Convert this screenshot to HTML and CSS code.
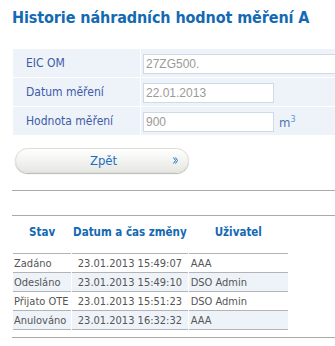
FILE: index.html
```html
<!doctype html>
<html lang="cs">
  <head>
    <meta charset="UTF-8" />
    <title>Historie náhradních hodnot měření A</title>
    <link rel="stylesheet" href="styles.css">
  </head>
  <body>
    <div class="page">
      <h1 class="page-title">Historie náhradních hodnot měření A</h1>

      <table class="detail-form">
        <tr>
          <td class="label">EIC OM</td>
          <td class="field"><input type="text" class="input-field input-wide" value="27ZG500." readonly /></td>
        </tr>
        <tr>
          <td class="label">Datum měření</td>
          <td class="field"><input type="text" class="input-field" value="22.01.2013" readonly /></td>
        </tr>
        <tr>
          <td class="label">Hodnota měření</td>
          <td class="field"><input type="text" class="input-field" value="900" readonly /><span class="unit">m<sup>3</sup></span></td>
        </tr>
      </table>

      <button type="button" class="back-btn">
        <span class="back-text">Zpět</span>
        <svg class="back-arrow" width="5" height="7" viewBox="0 0 5 7">
          <path d="M0.5 0.5 L2.5 3.5 L0.5 6.5 M2.5 0.5 L4.5 3.5 L2.5 6.5" fill="none" stroke="#1c6fc0" stroke-width="1" />
        </svg>
      </button>

      <hr class="divider first" />
      <hr class="divider" />

      <!-- Historie stavu -->
      <table class="history">
        <thead>
          <tr>
            <th class="col-state">Stav</th>
            <th class="col-date">Datum a čas změny</th>
            <th class="col-user">Uživatel</th>
          </tr>
        </thead>
        <tbody>
          <tr>
            <td class="col-state">Zadáno</td>
            <td class="col-date">23.01.2013 15:49:07</td>
            <td class="col-user">AAA</td>
          </tr>
          <tr class="alt">
            <td class="col-state">Odesláno</td>
            <td class="col-date">23.01.2013 15:49:10</td>
            <td class="col-user">DSO Admin</td>
          </tr>
          <tr>
            <td class="col-state">Přijato OTE</td>
            <td class="col-date">23.01.2013 15:51:23</td>
            <td class="col-user">DSO Admin</td>
          </tr>
          <tr class="alt">
            <td class="col-state">Anulováno</td>
            <td class="col-date">23.01.2013 16:32:32</td>
            <td class="col-user">AAA</td>
          </tr>
        </tbody>
      </table>

      <hr class="divider last" />
    </div>
  </body>
</html>
```
FILE: styles.css
```css
html,
body {
  margin: 0;
  background: white;
}

body {
  font-family: "DejaVu Sans Condensed", "DejaVu Sans", sans-serif;
  color: #555;
}

.page {
  margin-left: 12px;
  overflow: hidden;
}

.page-title {
  margin: 0;
  padding-top: 8px;
  height: 48px;
  box-sizing: border-box;
  font-size: 16px;
  line-height: 20px;
  letter-spacing: -0.1px;
  font-weight: bold;
  white-space: nowrap;
  color: #1469b3;
}

.detail-form {
  border-collapse: separate;
  border-spacing: 1px;
  width: calc(100% + 1px);
  table-layout: fixed;
}

.detail-form td {
  background: #eef3f9;
  height: 28px;
  padding: 0;
  box-sizing: border-box;
  white-space: nowrap;
  overflow: hidden;
}

.detail-form .label {
  width: 127px;
  padding-left: 13px;
  font-size: 12px;
  color: #3d5aa8;
}

.detail-form .field {
  padding-left: 2px;
  padding-top: 1px;
}

.input-field {
  width: 131px;
  height: 20px;
  box-sizing: border-box;
  border: 1px solid #cddbe8;
  padding: 0 2px;
  font-family: "Liberation Sans", Arial, sans-serif;
  font-size: 12px;
  color: #9a9a9a;
  background: white;
  outline: none;
  vertical-align: middle;
}

.input-wide {
  width: 250px;
}

.unit {
  margin-left: 5px;
  font-size: 13px;
  color: #4f74b4;
  vertical-align: middle;
}

.unit sup {
  font-size: 9px;
  color: #4f9ee0;
}

.back-btn {
  display: flex;
  align-items: center;
  margin: 12px 0 0 3px;
  width: 174px;
  height: 25px;
  padding: 0 10px 0 0;
  border: 1px solid #dcdcd8;
  border-radius: 13px;
  background: linear-gradient(#ffffff 0%, #f3f3f1 50%, #e6e6e3 100%);
  box-shadow: 0 1px 1px #b8b8b4;
  font-family: "DejaVu Sans Condensed", "DejaVu Sans", sans-serif;
  cursor: pointer;
}

.back-text {
  flex: 1;
  text-align: center;
  padding-left: 18px;
  font-size: 13px;
  color: #1c6fc0;
}

.back-arrow {
  display: block;
}

.divider {
  border: none;
  border-top: 1px solid #aaaaaa;
  margin: 0;
}

.divider.first {
  margin-top: 17px;
}

.divider + .divider {
  margin-top: 24px;
}

.history {
  border-collapse: separate;
  border-spacing: 1px 0;
  table-layout: fixed;
  width: 277px;
  font-size: 11px;
}

.history th {
  padding: 9px 0 14px 0;
  font-size: 11.5px;
  line-height: 14px;
  font-weight: bold;
  color: #1469b3;
  text-align: center;
  white-space: nowrap;
}

.history td {
  height: 19px;
  box-sizing: border-box;
  padding: 0 0 0 1px;
  border-bottom: 1px solid #b4b4b4;
  white-space: nowrap;
  overflow: hidden;
}

.history tbody tr:first-child td {
  border-top: 1px solid #b4b4b4;
  height: 20px;
}

.history tr.alt td {
  background: #eef3f9;
}

.history .col-state {
  width: 58px;
}

.history .col-date {
  width: 115px;
}

.history td.col-date {
  text-align: center;
  padding-left: 0;
}

.history .col-user {
  width: 99px;
}

.history td.col-user {
  padding-left: 2px;
}

.divider.last {
  margin-top: 7px;
}
```
